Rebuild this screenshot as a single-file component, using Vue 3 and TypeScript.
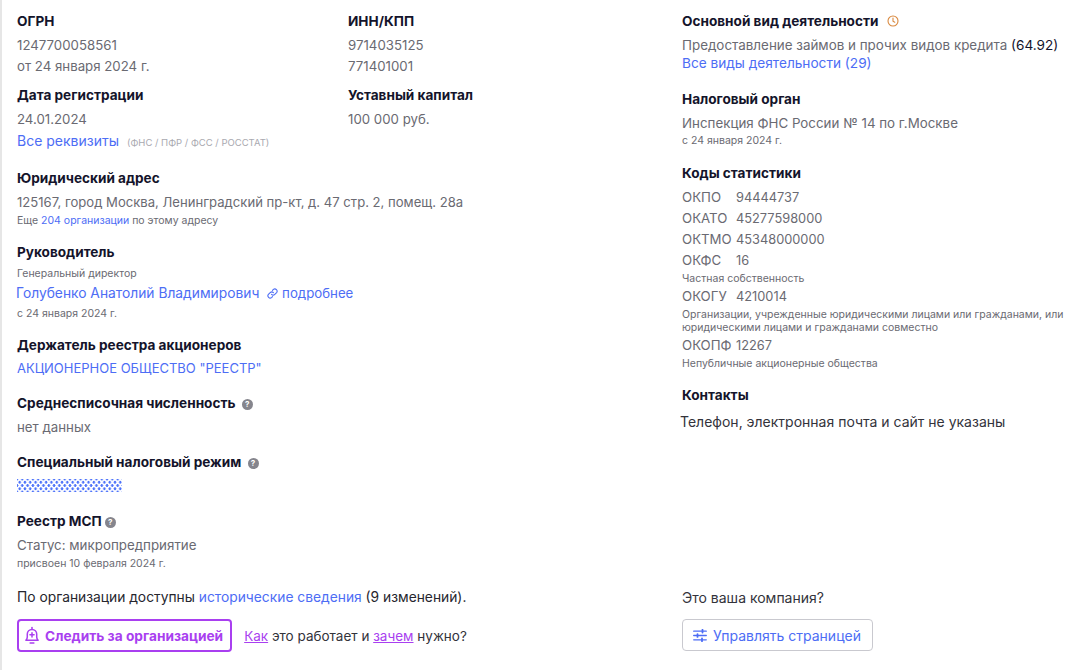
<script setup lang="ts">
interface StatCode {
  name: string
  value: string
  notes?: string[]
}

const codes: StatCode[] = [
  { name: 'ОКПО', value: '94444737' },
  { name: 'ОКАТО', value: '45277598000' },
  { name: 'ОКТМО', value: '45348000000' },
  { name: 'ОКФС', value: '16', notes: ['Частная собственность'] },
  {
    name: 'ОКОГУ',
    value: '4210014',
    notes: ['Организации, учрежденные юридическими лицами или гражданами, или', 'юридическими лицами и гражданами совместно']
  },
  { name: 'ОКОПФ', value: '12267', notes: ['Непубличные акционерные общества'] }
]
</script>

<template>
  <div class="page">
    <div class="col col-left">
      <div class="requisites">
        <div>
          <div class="title">ОГРН</div>
          <div class="value first">1247700058561</div>
          <div class="value">от 24 января 2024 г.</div>
        </div>
        <div>
          <div class="title">ИНН/КПП</div>
          <div class="value first">9714035125</div>
          <div class="value">771401001</div>
        </div>
        <div class="reg">
          <div class="title">Дата регистрации</div>
          <div class="value first">24.01.2024</div>
          <div class="value link-line">
            <a class="link">Все реквизиты</a>
            <span class="agencies">(ФНС / ПФР / ФСС / РОССТАТ)</span>
          </div>
        </div>
        <div class="reg">
          <div class="title">Уставный капитал</div>
          <div class="value first">100 000 руб.</div>
        </div>
      </div>

      <section class="block">
        <div class="title">Юридический адрес</div>
        <div class="value first address">125167, город Москва, Ленинградский пр-кт, д. 47 стр. 2, помещ. 28а</div>
        <div class="small address-note">Еще <a class="link">204 организации</a> по этому адресу</div>
      </section>

      <section class="block snug">
        <div class="title">Руководитель</div>
        <div class="small post">Генеральный директор</div>
        <div class="value person">
          <a class="link name">Голубенко Анатолий Владимирович</a>
          <a class="link more">
            <svg width="11" height="11" viewBox="0 0 24 24" fill="none" stroke="currentColor" stroke-width="2.4" stroke-linecap="round" stroke-linejoin="round">
              <path d="M10 14a5 5 0 0 0 7 0l4-4a5 5 0 0 0-7-7l-2 2" />
              <path d="M14 10a5 5 0 0 0-7 0l-4 4a5 5 0 0 0 7 7l2-2" />
            </svg>
            подробнее
          </a>
        </div>
        <div class="small since">с 24 января 2024 г.</div>
      </section>

      <section class="block snug">
        <div class="title">Держатель реестра акционеров</div>
        <div class="value holder"><a class="link">АКЦИОНЕРНОЕ ОБЩЕСТВО "РЕЕСТР"</a></div>
      </section>

      <section class="block tall">
        <div class="title">Среднесписочная численность <span class="help">?</span></div>
        <div class="value first">нет данных</div>
      </section>

      <section class="block tall">
        <div class="title">Специальный налоговый режим <span class="help">?</span></div>
        <div class="hidden-value"></div>
      </section>

      <section class="block msp">
        <div class="title">Реестр МСП <span class="help near">?</span></div>
        <div class="value first status">Статус: микропредприятие</div>
        <div class="small address-note">присвоен 10 февраля 2024 г.</div>
      </section>

      <div class="history">
        По организации доступны <a class="link">исторические сведения</a> (9 изменений).
      </div>

      <div class="actions">
        <button class="follow" type="button">
          <svg width="16" height="19" viewBox="0 0 17 19" fill="none" stroke="currentColor" stroke-width="1.6" stroke-linecap="round" stroke-linejoin="round">
            <path d="M8.500 1v1.600" />
            <path d="M2 14.500c1-1 1.500-2 1.500-3.500V8a5 5 0 0 1 10 0v3c0 1.500.5 2.500 1.500 3.500z" />
            <path d="M6.500 17.500h4" />
            <path d="M8.500 6.500v4.500M6.300 8.700h4.400" />
          </svg>
          Следить за организацией
        </button>
        <div class="how">
          <a class="purple">Как</a> это работает и <a class="purple">зачем</a> нужно?
        </div>
      </div>
    </div>

    <div class="col col-right">
      <section>
        <div class="title">
          Основной вид деятельности
          <svg class="clock" width="12" height="12" viewBox="0 0 12 12" fill="none" stroke="#d9893f" stroke-width="1.100" stroke-linecap="round">
            <circle cx="6" cy="6" r="5" />
            <path d="M6 3v3.200l1.800 1" />
          </svg>
        </div>
        <div class="value first okved">Предоставление займов и прочих видов кредита <span class="dark">(64.92)</span></div>
        <a class="link block-link">Все виды деятельности (29)</a>
      </section>

      <section class="block">
        <div class="title">Налоговый орган</div>
        <div class="value first status">Инспекция ФНС России № 14 по г.Москве</div>
        <div class="small">с 24 января 2024 г.</div>
      </section>

      <section class="block">
        <div class="title">Коды статистики</div>
        <div class="codes">
          <div v-for="code in codes" :key="code.name">
            <div class="value code">
              <span class="code-name">{{ code.name }}</span>
              <span class="code-value">{{ code.value }}</span>
            </div>
            <div v-if="code.notes" class="note-box">
              <div v-for="note in code.notes" :key="note" class="small note">{{ note }}</div>
            </div>
          </div>
        </div>
      </section>

      <section class="block">
        <div class="title">Контакты</div>
        <div class="no-contacts">Телефон, электронная почта и сайт не указаны</div>
      </section>

      <div class="owner">
        <div class="owner-q">Это ваша компания?</div>
        <button class="manage" type="button">
          <svg width="14" height="13" viewBox="0 0 14 13" fill="none" stroke="currentColor" stroke-width="1.300" stroke-linecap="round">
            <path d="M.7 2.200h12.600M.7 6.500h12.600M.7 10.800h12.600" />
            <path d="M9.500 .8v2.800M4.500 5.100v2.800M9 9.400v2.800" stroke-width="1.800" />
          </svg>
          Управлять страницей
        </button>
      </div>
    </div>
  </div>
</template>

<style>
body {
  margin: 0;
  background: #fff;
}
</style>

<style scoped>
.page {
  box-sizing: border-box;
  display: grid;
  grid-template-columns: 665px 395px;
  height: 670px;
  overflow: hidden;
  padding: 11px 0 0 15px;
  border-left: 2px solid #e6e6e6;
  font-family: Inter, "Noto Sans", sans-serif;
  font-size: 14px;
  color: #6a6a72;
}

.col {
  display: flex;
  flex-direction: column;
}

.requisites {
  display: grid;
  grid-template-columns: 331px 1fr;
}

.reg {
  margin-top: 8px;
}

.title {
  font-size: 13.6px;
  line-height: 20px;
  font-weight: 700;
  color: #14142b;
}

.value {
  font-size: 13.25px;
  line-height: 21px;
}

.first {
  margin-top: 4px;
}

.address {
  font-size: 13.1px;
}

.address-note {
  margin-top: 1px;
}

.status {
  font-size: 13.35px;
}

.okved {
  font-size: 13.4px;
}

.link {
  color: #4d6df5;
  text-decoration: none;
}

.link-line .link {
  font-size: 14px;
}

.agencies {
  margin-left: 8px;
  font-size: 9.500px;
  color: #a9a9b0;
}

.small {
  font-size: 10.500px;
  line-height: 14px;
}

.block {
  margin-top: 15px;
}

.snug {
  margin-top: 14px;
}

.post {
  margin-top: 5px;
}

.person {
  margin-top: 2px;
  margin-left: -1px;
}

.name {
  font-size: 13.8px;
}

.more {
  margin-left: 8px;
}

.more svg {
  vertical-align: -1px;
}

.since {
  margin-top: 3px;
}

.holder {
  margin-top: 3px;
  font-size: 13px;
}

.tall {
  margin-top: 14px;
}

.help {
  display: inline-block;
  width: 11px;
  height: 11px;
  margin-left: 3px;
  border-radius: 50%;
  background: #85858d;
  color: #fff;
  font-size: 8px;
  line-height: 11px;
  font-weight: 700;
  text-align: center;
  vertical-align: 1px;
}

.help.near {
  margin-left: 0;
}

.hidden-value {
  width: 105px;
  height: 13px;
  margin-top: 7px;
  background-color: #fff;
  background-image:
    radial-gradient(circle, #4f74fa 1.2px, transparent 1.5px),
    radial-gradient(circle, #4f74fa 1.2px, transparent 1.5px);
  background-size: 5.3px 6.500px;
  background-position: 0 0, 2.650px 3.250px;
}

.msp {
  margin-top: 19px;
}

.history {
  margin-top: 16px;
  font-size: 13.8px;
  line-height: 21px;
  color: #26262e;
}

.actions {
  display: flex;
  align-items: center;
  gap: 12px;
  margin-top: 11px;
}

.follow {
  display: flex;
  align-items: center;
  gap: 5px;
  height: 33px;
  box-sizing: border-box;
  padding: 0 7px 0 5px;
  border: 2px solid #a93ff0;
  border-radius: 4px;
  background: #fff;
  color: #a93ff0;
  font: 700 13.700px Inter, sans-serif;
}

.how {
  font-size: 13.5px;
  color: #33333b;
}

.purple {
  color: #a93ff0;
  text-decoration: underline;
}

.clock {
  margin-left: 5px;
  vertical-align: -1px;
}

.dark {
  color: #14142b;
  font-size: 13.6px;
}

.block-link {
  display: block;
  margin-top: -3px;
  font-size: 13.65px;
  line-height: 21px;
}

.codes {
  margin-top: 4px;
}

.code {
  display: flex;
}

.code-name {
  width: 54px;
}

.code-value {
  font-size: 12.8px;
}

.note-box {
  margin-top: 1px;
}

.note {
  line-height: 13.500px;
}

.no-contacts {
  margin-top: 6px;
  margin-left: -2px;
  line-height: 21px;
  color: #33333b;
}

.owner {
  margin-top: auto;
  margin-bottom: 19px;
}

.owner-q {
  line-height: 21px;
  color: #33333b;
}

.manage {
  display: flex;
  align-items: center;
  gap: 6px;
  height: 32px;
  box-sizing: border-box;
  margin-top: 11px;
  padding: 0 11px 0 10px;
  border: 1px solid #c9c9cf;
  border-radius: 4px;
  background: #fff;
  color: #4d6df5;
  font: 400 14px Inter, sans-serif;
}
</style>
